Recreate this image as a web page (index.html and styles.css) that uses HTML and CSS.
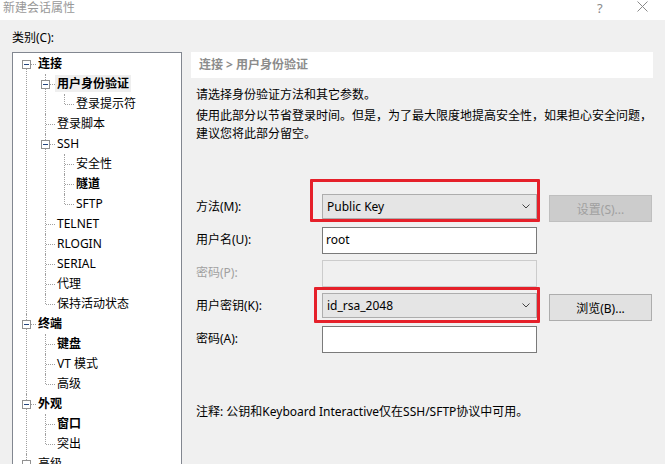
FILE: index.html
```html
<!DOCTYPE html>
<html lang="zh-CN">
<head>
    <meta charset="UTF-8">
    <title>新建会话属性</title>
    <link rel="stylesheet" href="styles.css">
</head>
<body>
<!-- 标题栏 -->
<div class="titlebar">
    <span class="title">新建会话属性</span>
    <span class="help">?</span>
    <span class="close">
        <svg width="11" height="11" viewBox="0 0 11 11"><path d="M0.5 0.5 L10.5 10.5 M10.5 0.5 L0.5 10.5" stroke="#8a8a8a" stroke-width="1" fill="none"/></svg>
    </span>
</div>

<div class="dialog">
    <!-- 左侧类别树 -->
    <div class="category">
        <div class="cat-label">类别(C):</div>
        <div class="tree">
            <ul class="nodes root">
                <li>
                    <div class="row"><i class="exp"></i><span class="b">连接</span></div>
                    <ul class="nodes">
                        <li>
                            <div class="row"><i class="exp"></i><span class="b sel">用户身份验证</span></div>
                            <ul class="nodes">
                                <li><div class="row"><span>登录提示符</span></div></li>
                            </ul>
                        </li>
                        <li><div class="row"><span>登录脚本</span></div></li>
                        <li>
                            <div class="row"><i class="exp"></i><span>SSH</span></div>
                            <ul class="nodes">
                                <li><div class="row"><span>安全性</span></div></li>
                                <li><div class="row"><span class="b">隧道</span></div></li>
                                <li><div class="row"><span>SFTP</span></div></li>
                            </ul>
                        </li>
                        <li><div class="row"><span>TELNET</span></div></li>
                        <li><div class="row"><span>RLOGIN</span></div></li>
                        <li><div class="row"><span>SERIAL</span></div></li>
                        <li><div class="row"><span>代理</span></div></li>
                        <li><div class="row"><span>保持活动状态</span></div></li>
                    </ul>
                </li>
                <li>
                    <div class="row"><i class="exp"></i><span class="b">终端</span></div>
                    <ul class="nodes">
                        <li><div class="row"><span class="b">键盘</span></div></li>
                        <li><div class="row"><span>VT 模式</span></div></li>
                        <li><div class="row"><span>高级</span></div></li>
                    </ul>
                </li>
                <li>
                    <div class="row"><i class="exp"></i><span class="b">外观</span></div>
                    <ul class="nodes">
                        <li><div class="row"><span class="b">窗口</span></div></li>
                        <li><div class="row"><span>突出</span></div></li>
                    </ul>
                </li>
                <li><div class="row"><i class="exp"></i><span>高级</span></div></li>
            </ul>
        </div>
    </div>

    <!-- 右侧属性页 -->
    <div class="pane">
        <div class="crumb">连接 &gt; 用户身份验证</div>
        <p class="intro">请选择身份验证方法和其它参数。</p>
        <p class="desc">使用此部分以节省登录时间。但是，为了最大限度地提高安全性，如果担心安全问题，<br>建议您将此部分留空。</p>

        <div class="form">
            <label class="lbl">方法(M):</label>
            <div class="combo-wrap">
                <div class="combo">
                    <span>Public Key</span>
                    <svg class="chev" width="8" height="5" viewBox="0 0 8 5"><polyline points="0.5,0.5 4,4 7.5,0.5" fill="none" stroke="#444" stroke-width="1"/></svg>
                </div>
                <div class="mark mark-method"></div>
            </div>
            <button class="btn" disabled>设置(S)...</button>

            <label class="lbl">用户名(U):</label>
            <div class="field">root</div>
            <div></div>

            <label class="lbl off">密码(P):</label>
            <div class="field off"></div>
            <div></div>

            <label class="lbl">用户密钥(K):</label>
            <div class="combo-wrap">
                <div class="combo">
                    <span>id_rsa_2048</span>
                    <svg class="chev" width="8" height="5" viewBox="0 0 8 5"><polyline points="0.5,0.5 4,4 7.5,0.5" fill="none" stroke="#444" stroke-width="1"/></svg>
                </div>
                <div class="mark mark-key"></div>
            </div>
            <button class="btn">浏览(B)...</button>

            <label class="lbl">密码(A):</label>
            <div class="field"></div>
            <div></div>
        </div>

        <p class="note">注释: 公钥和Keyboard Interactive仅在SSH/SFTP协议中可用。</p>
    </div>
</div>
</body>
</html>
```

FILE: styles.css
```css
/* 重置 */
* {
    margin: 0;
    padding: 0;
    box-sizing: border-box;
}

body {
    font-family: "Noto Sans", "Noto Sans CJK SC", sans-serif;
    font-size: 12px;
    line-height: 18px;
    color: #000;
    background: #f0f0f0;
    width: 665px;
    height: 464px;
    overflow: hidden;
}

/* 标题栏 */
.titlebar {
    height: 20px;
    background: #fff;
    display: flex;
    align-items: center;
    padding-left: 3px;
    color: #999;
    line-height: 14px;
}

.title {
    flex: 1;
    margin-top: -5px;
}

.help {
    width: 10px;
    margin-top: -5px;
    font-size: 13px;
    color: #8a8a8a;
}

.close {
    display: flex;
    margin: -8px 17px 0 30px;
}

/* 主体 */
.dialog {
    display: flex;
    padding-left: 12px;
}

.category {
    width: 170px;
}

.cat-label {
    margin-top: 9px;
    height: 18px;
}

.tree {
    margin-top: 5px;
    height: 420px;
    padding-top: 1px;
    background: #fff;
    border: 1px solid #828790;
    overflow: hidden;
}

/* 树节点 */
.nodes {
    list-style: none;
    padding-left: 19px;
}

.root {
    padding-left: 0;
}

.nodes li {
    position: relative;
}

/* 竖向虚线 */
.nodes li::before {
    content: "";
    position: absolute;
    left: 13px;
    top: 0;
    bottom: 0;
    border-left: 1px dotted #a0a0a0;
}

.nodes li:last-child::before {
    bottom: auto;
    height: 10px;
}

.root > li:first-child::before {
    top: 10px;
}

.row {
    position: relative;
    height: 20px;
    line-height: 20px;
    padding-left: 25px;
    white-space: nowrap;
}

/* 横向虚线 */
.row::before {
    content: "";
    position: absolute;
    left: 14px;
    top: 10px;
    width: 9px;
    border-top: 1px dotted #a0a0a0;
}

.row span {
    position: relative;
    padding: 0 2px;
    margin-left: -2px;
}

.b {
    font-weight: bold;
}

.sel {
    background: #efefef;
    padding: 0 3px 0 3px;
    margin-left: -3px;
}

/* 展开/折叠方块 */
.exp {
    position: absolute;
    left: 9px;
    top: 6px;
    width: 9px;
    height: 9px;
    border: 1px solid #919191;
    background: #fff;
    z-index: 1;
}

.exp::after {
    content: "";
    position: absolute;
    left: 1px;
    top: 3px;
    width: 5px;
    height: 1px;
    background: #24467f;
}

/* 右侧属性页 */
.pane {
    margin-left: 9px;
    margin-top: 32px;
    width: 462px;
}

.crumb {
    height: 26px;
    line-height: 26px;
    background: #fff;
    padding-left: 8px;
    color: #8c8c8c;
    font-weight: bold;
}

.intro {
    margin-top: 8px;
    padding-left: 5px;
}

.desc {
    margin-top: 3px;
    padding-left: 5px;
    white-space: nowrap;
}

/* 表单 */
.form {
    margin-top: 51px;
    padding-left: 5px;
    display: grid;
    grid-template-columns: 126px 215px 115px;
    grid-auto-rows: 27px;
    row-gap: 6px;
    align-items: start;
}

.lbl {
    align-self: center;
    margin-top: -2px;
}

.lbl.off {
    color: #a0a0a0;
}

.combo-wrap {
    position: relative;
}

.combo {
    height: 25px;
    background: #e5e5e5;
    border: 1px solid #adadad;
    display: flex;
    align-items: center;
    justify-content: space-between;
    padding: 0 6px 0 4px;
}

.chev {
    display: block;
}

.field {
    height: 27px;
    background: #fff;
    border: 1px solid #7a7a7a;
    padding: 3px 3px 0;
}

.field.off {
    background: #f0f0f0;
    border-color: #cccccc;
}

/* 红色标注框 */
.mark {
    position: absolute;
    border: 3px solid #e5202a;
    border-radius: 1px;
}

.mark-method {
    left: -12px;
    top: -15px;
    right: -3px;
    bottom: -3px;
}

.mark-key {
    left: -8px;
    top: -6px;
    right: -3px;
    bottom: -5px;
}

/* 按钮 */
.btn {
    margin-left: 12px;
    margin-top: 1px;
    width: 103px;
    height: 27px;
    font-family: inherit;
    font-size: 12px;
    background: #e1e1e1;
    border: 1px solid #adadad;
    color: #000;
}

.btn:disabled {
    background: #cccccc;
    border-color: #bfbfbf;
    color: #a0a0a0;
}

.note {
    margin-top: 50px;
    padding-left: 5px;
    white-space: nowrap;
}
```
